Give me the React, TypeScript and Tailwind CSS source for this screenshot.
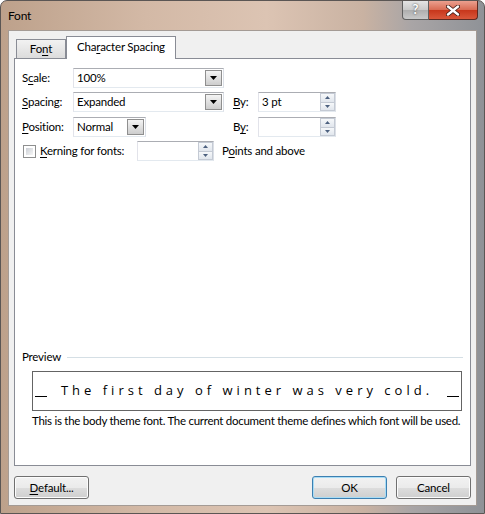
import React from 'react';

const ui = "font-['Segoe_UI','Lato',sans-serif] text-[11.5px] tracking-[-0.2px] text-black whitespace-nowrap";

// access-key underline
const K = ({ c }: { c: string }) => <span className="underline decoration-1 underline-offset-[2px]">{c}</span>;

const DownArrow = () => (
  <svg width="7" height="4" viewBox="0 0 7 4">
    <path d="M0 0h7L3.5 4z" fill="#000" />
  </svg>
);

const Combo = ({ value, width }: { value: string; width: string }) => (
  <div className={`${width} h-[20px] flex bg-white border border-[#abadb3] border-b-[#e3e9ef] border-l-[#e2e3ea] border-r-[#dbdfe6]`}>
    <div className="flex-1 pl-[3px] leading-[18px]">{value}</div>
    <div className="w-[17px] m-px flex items-center justify-center border border-[#8f8f8f] bg-gradient-to-b from-[#f4f4f4] to-[#cdcdcd]">
      <DownArrow />
    </div>
  </div>
);

const SpinArrow = ({ up }: { up?: boolean }) => (
  <svg width="5" height="3" viewBox="0 0 5 3">
    <path d={up ? 'M0 3h5L2.5 0z' : 'M0 0h5L2.5 3z'} fill="#4c607f" />
  </svg>
);

const Spin = ({ value, width }: { value?: string; width: string }) => (
  <div className={`${width} h-[20px] flex bg-white border border-[#abadb3] border-b-[#e3e9ef] border-l-[#e2e3ea] border-r-[#dbdfe6]`}>
    <div className="flex-1 pl-[3px] leading-[18px]">{value}</div>
    <div className="w-[15px] flex flex-col">
      <div className="flex-1 flex items-center justify-center border border-[#c4cad4] bg-gradient-to-b from-[#f6f8fa] to-[#e1e6ed]">
        <SpinArrow up />
      </div>
      <div className="flex-1 flex items-center justify-center border border-t-0 border-[#c4cad4] bg-gradient-to-b from-[#f6f8fa] to-[#e1e6ed]">
        <SpinArrow />
      </div>
    </div>
  </div>
);

const Button = ({ children, primary }: { children: React.ReactNode; primary?: boolean }) => (
  <div
    className={`w-[75px] h-[23px] flex items-center justify-center rounded-[3px] border ${
      primary ? 'border-[#3c7fb1] shadow-[inset_0_0_0_1px_#a8dcf5]' : 'border-[#707070] shadow-[inset_0_0_0_1px_#fcfcfc]'
    } bg-[linear-gradient(#f2f2f2_0%,#ebebeb_50%,#dddddd_51%,#cfcfcf_100%)]`}
  >
    {children}
  </div>
);

export default function App() {
  return (
    <div className={`${ui} w-[485px] h-[514px] flex flex-col rounded-t-[7px] border border-[#5b5654] bg-[linear-gradient(90deg,#bda18b_0%,#d3b9a6_30%,#dcc4b3_55%,#c9b2a2_75%,#a9a5a6_85%,#8f9297_100%)]`}>
      {/* title bar */}
      <div className="h-[29px] flex items-start">
        <div className="pl-[7px] pt-[6px] text-[12px]">Font</div>
        <div className="ml-auto mr-[6px] flex">
          <div className="w-[27px] h-[19px] flex items-center justify-center rounded-bl-[4px] border border-t-0 border-[#5f5f5f] bg-[linear-gradient(#e4e4e4_0%,#c9c9c9_50%,#aeaeae_51%,#c9c9c9_100%)] text-white font-bold text-[13px] [text-shadow:0_0_2px_#333]">
            ?
          </div>
          <div className="w-[49px] h-[19px] flex items-center justify-center rounded-br-[4px] border border-l-0 border-t-0 border-[#5f2a21] bg-[linear-gradient(#eba08f_0%,#d86a52_50%,#c7361b_51%,#d9573a_100%)]">
            <svg width="14" height="11" viewBox="0 0 14 11">
              <path d="M2 1.5l10 8M12 1.5l-10 8" stroke="#3b1a14" strokeWidth="4" strokeLinecap="round" />
              <path d="M2 1.5l10 8M12 1.5l-10 8" stroke="#fff" strokeWidth="2.4" strokeLinecap="round" />
            </svg>
          </div>
        </div>
      </div>

      {/* client area */}
      <div className="mx-[7px] h-[476px] bg-[#f0f0f0] border border-[#a49b95] px-[5px] pt-[5px] flex flex-col">
        {/* tabs */}
        <div className="h-[22px] flex items-end pl-[2px]">
          <div className="w-[50px] h-[19px] flex items-center justify-center border border-b-0 border-[#898c95] bg-gradient-to-b from-[#f2f2f2] to-[#dcdcdc]">
            Fo<K c="n" />t
          </div>
          <div className="w-[110px] h-[23px] -mb-px relative z-10 flex items-center justify-center pb-[2px] border border-b-0 border-[#898c95] bg-white">
            Cha<K c="r" />acter Spacing
          </div>
        </div>

        {/* tab panel */}
        <div className="h-[408px] bg-white border border-[#898c95] px-[7px] pt-[9px] flex flex-col">
          <div className="flex items-center h-[20px]">
            <div className="w-[51px]">S<K c="c" />ale:</div>
            <Combo value="100%" width="w-[151px]" />
          </div>
          <div className="flex items-center h-[20px] mt-[4px]">
            <div className="w-[51px]"><K c="S" />pacing:</div>
            <Combo value="Expanded" width="w-[151px]" />
            <div className="w-[25px] ml-[9px]"><K c="B" />y:</div>
            <Spin value="3 pt" width="w-[78px]" />
          </div>
          <div className="flex items-center h-[20px] mt-[5px]">
            <div className="w-[51px]"><K c="P" />osition:</div>
            <Combo value="Normal" width="w-[73px]" />
            <div className="w-[25px] ml-[87px]">B<K c="y" />:</div>
            <Spin width="w-[78px]" />
          </div>
          <div className="flex items-center h-[20px] mt-[4px]">
            <div className="ml-px w-[13px] h-[13px] border border-[#8e8f8f] p-[2px] bg-white">
              <div className="w-full h-full bg-gradient-to-br from-[#cbcfd5] to-[#f6f6f6]" />
            </div>
            <div className="w-[97px] ml-[4px]"><K c="K" />erning for fonts:</div>
            <Spin width="w-[77px]" />
            <div className="ml-[8px]">P<K c="o" />ints and above</div>
          </div>

          {/* preview */}
          <div className="mt-[189px] h-[14px] flex items-center">
            <div>Preview</div>
            <div className="flex-1 h-px ml-[6px] bg-[#d5dfe5]" />
          </div>
          <div className="ml-[10px] mt-[7px] w-[430px] h-[40px] border border-[#646464] flex items-center px-[2px]">
            <div className="w-[12px] h-px bg-black mt-[11px]" />
            <div className="flex-1 text-center tracking-[4px] text-[13px] font-['Open_Sans',sans-serif]">
              The first day of winter was very cold.
            </div>
            <div className="w-[12px] h-px bg-black mt-[11px]" />
          </div>
          <div className="ml-[10px] mt-[2px] leading-[16px] tracking-[-0.27px]">
            This is the body theme font. The current document theme defines which font will be used.
          </div>
        </div>

        {/* buttons */}
        <div className="mt-[10px] flex">
          <Button>
            <K c="D" />efault...
          </Button>
          <div className="ml-auto flex gap-[9px]">
            <Button primary>OK</Button>
            <Button>Cancel</Button>
          </div>
        </div>
      </div>
      <div className="flex-1" />
    </div>
  );
}
